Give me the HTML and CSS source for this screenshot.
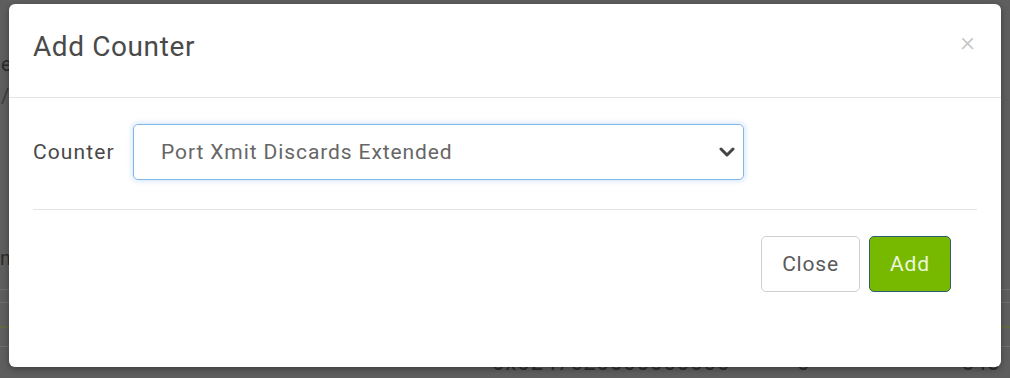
FILE: index.html
```html
<!DOCTYPE html>
<html>
<head>
<meta charset="utf-8">
<link rel="stylesheet" href="styles.css">
</head>
<body>
<div class="backdrop">
  <div class="bg-content">
    <span class="bg-e">e</span>
    <span class="bg-slash">/</span>
    <span class="bg-n">n</span>
    <div class="bg-line l1"></div>
    <div class="bg-line l2"></div>
    <div class="bg-line l3"></div>
    <div class="bg-line green"></div>
    <span class="bg-bottom b1">0x0247c20000000000</span>
    <span class="bg-bottom b2">0</span>
    <span class="bg-bottom b3">345</span>
  </div>
  <div class="modal">
    <div class="modal-header">
      <h1 class="modal-title">Add Counter</h1>
      <span class="close-x">×</span>
    </div>
    <div class="modal-body">
      <label class="field-label">Counter</label>
      <div class="select">
        <span class="select-text">Port Xmit Discards Extended</span>
        <svg class="chevron" width="16" height="10" viewBox="0 0 16 10"><path d="M2 2 L8 8 L14 2" fill="none" stroke="#444" stroke-width="3" stroke-linecap="round" stroke-linejoin="round"/></svg>
      </div>
    </div>
    <div class="modal-footer">
      <button class="btn btn-close">Close</button>
      <button class="btn btn-add">Add</button>
    </div>
  </div>
</div>
</body>
</html>
```
FILE: styles.css
```css
html, body {
  margin: 0;
  padding: 0;
}
body {
  width: 1010px;
  height: 378px;
  overflow: hidden;
  font-family: Roboto, "Liberation Sans", sans-serif;
  background: #5c5c5c;
}
.backdrop {
  position: relative;
  width: 1010px;
  height: 378px;
  padding: 4px 9px 0 9px;
  box-sizing: border-box;
  background: #5e5e5e;
}
.bg-content {
  position: absolute;
  inset: 0;
  color: #2a2a2a;
  font-size: 20px;
}
.bg-content span, .bg-line {
  position: absolute;
}
.bg-e { left: 1px; top: 52px; }
.bg-slash { left: 1px; top: 84px; color: #3a3a3a; }
.bg-n { left: 0; top: 246px; }
.bg-line { left: 0; width: 1010px; height: 1px; background: #6e6e6e; }
.l1 { top: 289px; }
.l2 { top: 302px; }
.l3 { top: 346px; }
.green { top: 326px; height: 2px; background: #5f6a3f; }
.bg-bottom { top: 350px; color: #2d2d2d; font-size: 22px; line-height: 26px; }
.b1 { left: 492px; letter-spacing: 1px; }
.b2 { left: 797px; }
.b3 { left: 962px; }

.modal {
  position: relative;
  width: 992px;
  height: 363px;
  background: #fff;
  border-radius: 6px;
  box-shadow: 0 2px 6px rgba(0,0,0,0.35);
  display: flex;
  flex-direction: column;
}
.modal-header {
  height: 94px;
  border-bottom: 1px solid #e4e4e4;
  display: flex;
  align-items: center;
  justify-content: space-between;
  padding: 0 26px 0 24px;
  box-sizing: border-box;
}
.modal-title {
  margin: 0;
  font-weight: 400;
  font-size: 28px;
  color: #4a4a4a;
  letter-spacing: 0.6px;
  position: relative;
  top: -4px;
}
.close-x {
  font-size: 28px;
  color: #c4c4c4;
  font-weight: 300;
  position: relative;
  top: -9px;
}
.modal-body {
  display: flex;
  align-items: center;
  padding: 26px 0 29px 0;
  border-bottom: 1px solid #e4e4e4;
  margin: 0 24px;
}
.field-label {
  font-size: 21px;
  letter-spacing: 1.1px;
  color: #484848;
  width: 100px;
}
.select {
  width: 611px;
  height: 56px;
  box-sizing: border-box;
  border: 1px solid #7fb6ec;
  border-radius: 5px;
  box-shadow: 0 0 4px 2px rgba(120, 180, 240, 0.25);
  display: flex;
  align-items: center;
  justify-content: space-between;
  padding: 0 8px 0 27px;
}
.select-text {
  font-size: 21px;
  letter-spacing: 0.9px;
  color: #666;
}
.chevron {
  display: block;
}
.modal-footer {
  display: flex;
  justify-content: flex-end;
  gap: 9px;
  padding: 26px 50px 0 0;
}
.btn {
  height: 56px;
  font-family: Roboto, "Liberation Sans", sans-serif;
  font-size: 21px;
  letter-spacing: 0.8px;
  border-radius: 5px;
  box-sizing: border-box;
  cursor: pointer;
}
.btn-close {
  width: 99px;
  background: #fff;
  border: 1px solid #cfcfcf;
  color: #5a5a5a;
}
.btn-add {
  width: 82px;
  background: #76b900;
  border: 1px solid #2f5d6e;
  color: #eef7dc;
}
```
